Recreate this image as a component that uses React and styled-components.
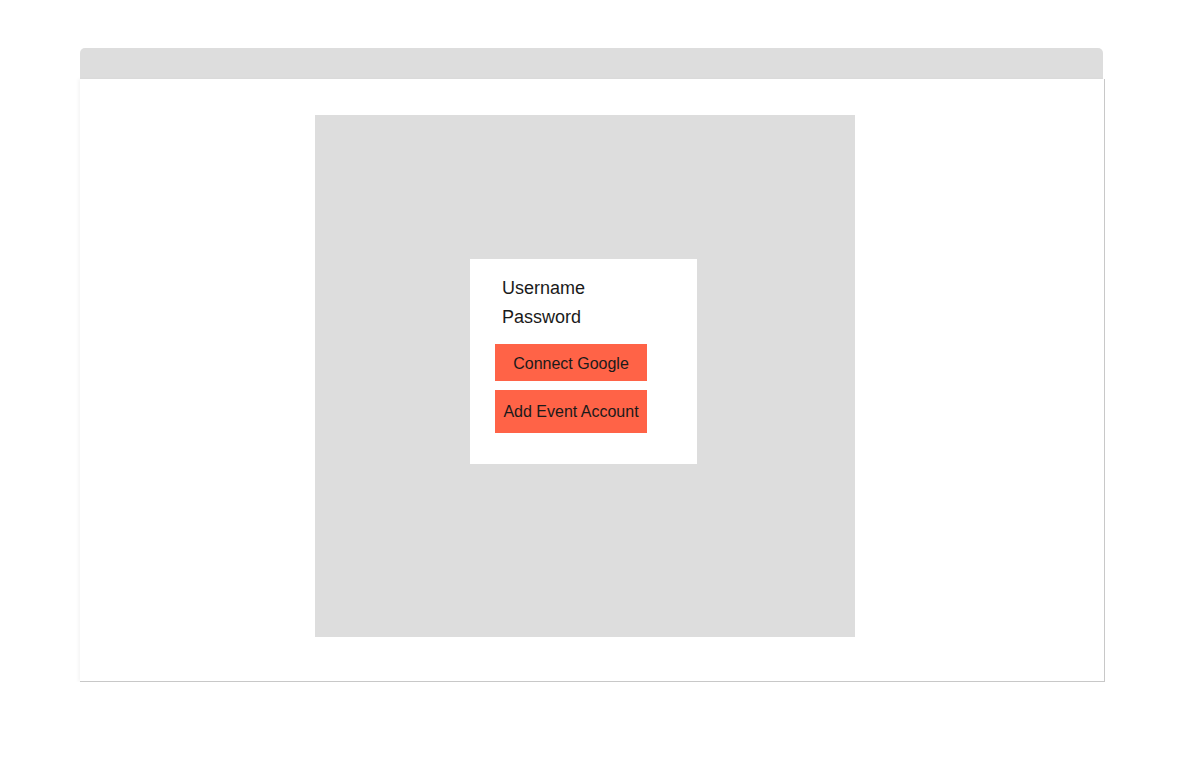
import React from "react";
import styled, { createGlobalStyle } from "styled-components";

const Global = createGlobalStyle`
  html, body { margin: 0; padding: 0; background: #fff; }
  body { font-family: "Liberation Sans", Arial, sans-serif; }
`;

const Page = styled.div`
  padding: 48px 0 0 80px;
`;

const Window = styled.div`
  display: flex;
  flex-direction: column;
  width: 1025px;
`;

const TitleBar = styled.div`
  width: 1023px;
  height: 31px;
  background: #dddddd;
  border-radius: 5px 5px 0 0;
`;

const Body = styled.div`
  box-sizing: border-box;
  width: 1025px;
  height: 603px;
  border-right: 1px solid #c8c8c8;
  border-bottom: 1px solid #c8c8c8;
  box-shadow: -2px 0 3px rgba(0, 0, 0, 0.04);
  padding: 36px 0 0 235px;
  background: #fff;
`;

const Stage = styled.div`
  width: 540px;
  height: 522px;
  background: #dddddd;
  box-sizing: border-box;
  padding: 144px 0 0 155px;
`;

const Card = styled.div`
  width: 227px;
  height: 205px;
  box-sizing: border-box;
  background: #fff;
  padding: 15px 0 0 25px;
  display: flex;
  flex-direction: column;
  align-items: flex-start;
`;

const Label = styled.div`
  font-size: 18px;
  line-height: 29px;
  color: #1a1a1a;
  padding-left: 7px;
`;

const Buttons = styled.div`
  margin-top: 12px;
  display: flex;
  flex-direction: column;
  gap: 9px;
`;

const Button = styled.button`
  box-sizing: border-box;
  width: 152px;
  height: ${(p) => p.$h}px;
  border: none;
  border-radius: 0;
  background: #ff6347;
  color: #1a1a1a;
  font-family: "Liberation Sans", Arial, sans-serif;
  font-size: 16px;
  padding: ${(p) => p.$pt}px 0 0;
  display: flex;
  align-items: center;
  justify-content: center;
  cursor: pointer;
`;

export default function App() {
  return (
    <>
      <Global />
      <Page>
        <Window>
          <TitleBar />
          <Body>
            <Stage>
              <Card>
                <Label>Username</Label>
                <Label>Password</Label>
                <Buttons>
                  <Button $h={37} $pt={2}>Connect Google</Button>
                  <Button $h={43} $pt={0}>Add Event Account</Button>
                </Buttons>
              </Card>
            </Stage>
          </Body>
        </Window>
      </Page>
    </>
  );
}
